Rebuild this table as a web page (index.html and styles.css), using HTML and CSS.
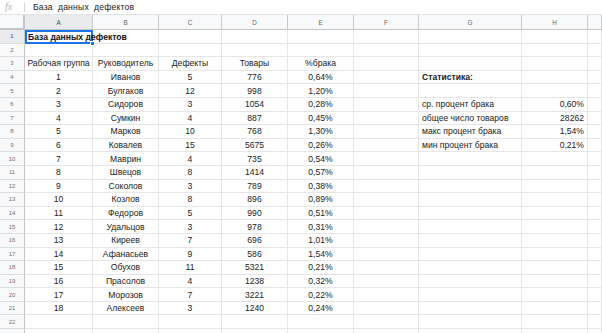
FILE: index.html
```html
<!DOCTYPE html>
<html lang="ru">
<head>
<meta charset="utf-8">
<link rel="stylesheet" href="styles.css">
</head>
<body>
<div class="fbar">
  <span class="fx">fx</span>
  <span class="sep"></span>
  <span class="ftext">База данных дефектов</span>
</div>
<div class="sheet">
  <div class="corner"></div>
  <div class="ch sel">A</div><div class="ch">B</div><div class="ch">C</div><div class="ch">D</div><div class="ch">E</div><div class="ch">F</div><div class="ch">G</div><div class="ch">H</div><div class="ch"></div>

  <div class="rh sel">1</div><div class="c active"><span class="title">База данных дефектов</span><span class="handle"></span></div><div class="c"></div><div class="c"></div><div class="c"></div><div class="c"></div><div class="c"></div><div class="c"></div><div class="c"></div><div class="c"></div>
  <div class="rh">2</div><div class="c"></div><div class="c"></div><div class="c"></div><div class="c"></div><div class="c"></div><div class="c"></div><div class="c"></div><div class="c"></div><div class="c"></div>
  <div class="rh">3</div><div class="c m">Рабочая группа</div><div class="c m">Руководитель</div><div class="c m">Дефекты</div><div class="c m">Товары</div><div class="c m">%брака</div><div class="c"></div><div class="c"></div><div class="c"></div><div class="c"></div>
  <div class="rh">4</div><div class="c m">1</div><div class="c m">Иванов</div><div class="c m">5</div><div class="c m">776</div><div class="c m">0,64%</div><div class="c"></div><div class="c b">Статистика:</div><div class="c"></div><div class="c"></div>
  <div class="rh">5</div><div class="c m">2</div><div class="c m">Булгаков</div><div class="c m">12</div><div class="c m">998</div><div class="c m">1,20%</div><div class="c"></div><div class="c"></div><div class="c"></div><div class="c"></div>
  <div class="rh">6</div><div class="c m">3</div><div class="c m">Сидоров</div><div class="c m">3</div><div class="c m">1054</div><div class="c m">0,28%</div><div class="c"></div><div class="c">ср. процент брака</div><div class="c r">0,60%</div><div class="c"></div>
  <div class="rh">7</div><div class="c m">4</div><div class="c m">Сумкин</div><div class="c m">4</div><div class="c m">887</div><div class="c m">0,45%</div><div class="c"></div><div class="c">общее число товаров</div><div class="c r">28262</div><div class="c"></div>
  <div class="rh">8</div><div class="c m">5</div><div class="c m">Марков</div><div class="c m">10</div><div class="c m">768</div><div class="c m">1,30%</div><div class="c"></div><div class="c">макс процент брака</div><div class="c r">1,54%</div><div class="c"></div>
  <div class="rh">9</div><div class="c m">6</div><div class="c m">Ковалев</div><div class="c m">15</div><div class="c m">5675</div><div class="c m">0,26%</div><div class="c"></div><div class="c">мин процент брака</div><div class="c r">0,21%</div><div class="c"></div>
  <div class="rh">10</div><div class="c m">7</div><div class="c m">Маврин</div><div class="c m">4</div><div class="c m">735</div><div class="c m">0,54%</div><div class="c"></div><div class="c"></div><div class="c"></div><div class="c"></div>
  <div class="rh">11</div><div class="c m">8</div><div class="c m">Швецов</div><div class="c m">8</div><div class="c m">1414</div><div class="c m">0,57%</div><div class="c"></div><div class="c"></div><div class="c"></div><div class="c"></div>
  <div class="rh">12</div><div class="c m">9</div><div class="c m">Соколов</div><div class="c m">3</div><div class="c m">789</div><div class="c m">0,38%</div><div class="c"></div><div class="c"></div><div class="c"></div><div class="c"></div>
  <div class="rh">13</div><div class="c m">10</div><div class="c m">Козлов</div><div class="c m">8</div><div class="c m">896</div><div class="c m">0,89%</div><div class="c"></div><div class="c"></div><div class="c"></div><div class="c"></div>
  <div class="rh">14</div><div class="c m">11</div><div class="c m">Федоров</div><div class="c m">5</div><div class="c m">990</div><div class="c m">0,51%</div><div class="c"></div><div class="c"></div><div class="c"></div><div class="c"></div>
  <div class="rh">15</div><div class="c m">12</div><div class="c m">Удальцов</div><div class="c m">3</div><div class="c m">978</div><div class="c m">0,31%</div><div class="c"></div><div class="c"></div><div class="c"></div><div class="c"></div>
  <div class="rh">16</div><div class="c m">13</div><div class="c m">Киреев</div><div class="c m">7</div><div class="c m">696</div><div class="c m">1,01%</div><div class="c"></div><div class="c"></div><div class="c"></div><div class="c"></div>
  <div class="rh">17</div><div class="c m">14</div><div class="c m">Афанасьев</div><div class="c m">9</div><div class="c m">586</div><div class="c m">1,54%</div><div class="c"></div><div class="c"></div><div class="c"></div><div class="c"></div>
  <div class="rh">18</div><div class="c m">15</div><div class="c m">Обухов</div><div class="c m">11</div><div class="c m">5321</div><div class="c m">0,21%</div><div class="c"></div><div class="c"></div><div class="c"></div><div class="c"></div>
  <div class="rh">19</div><div class="c m">16</div><div class="c m">Прасолов</div><div class="c m">4</div><div class="c m">1238</div><div class="c m">0,32%</div><div class="c"></div><div class="c"></div><div class="c"></div><div class="c"></div>
  <div class="rh">20</div><div class="c m">17</div><div class="c m">Морозов</div><div class="c m">7</div><div class="c m">3221</div><div class="c m">0,22%</div><div class="c"></div><div class="c"></div><div class="c"></div><div class="c"></div>
  <div class="rh">21</div><div class="c m">18</div><div class="c m">Алексеев</div><div class="c m">3</div><div class="c m">1240</div><div class="c m">0,24%</div><div class="c"></div><div class="c"></div><div class="c"></div><div class="c"></div>
  <div class="rh">22</div><div class="c"></div><div class="c"></div><div class="c"></div><div class="c"></div><div class="c"></div><div class="c"></div><div class="c"></div><div class="c"></div><div class="c"></div>
  <div class="rh">23</div><div class="c"></div><div class="c"></div><div class="c"></div><div class="c"></div><div class="c"></div><div class="c"></div><div class="c"></div><div class="c"></div><div class="c"></div>
</div>
</body>
</html>
```

FILE: styles.css
```css
* { box-sizing: border-box; }
html, body {
  margin: 0;
  padding: 0;
  background: #fff;
  overflow: hidden;
  width: 602px;
  height: 333px;
  font-family: "Liberation Sans", Arial, sans-serif;
}
.fbar {
  height: 15px;
  display: flex;
  align-items: center;
  border-bottom: 1px solid #e2e3e3;
  background: #fff;
}
.fx {
  font-family: "Liberation Serif", serif;
  font-style: italic;
  font-size: 10px;
  color: #b8b8b8;
  width: 24px;
  padding-left: 5px;
  line-height: 1;
}
.sep {
  width: 1px;
  height: 9px;
  background: #d6d6d6;
}
.ftext {
  padding-left: 8px;
  font-size: 8.6px;
  color: #222;
  word-spacing: 2.5px;
  letter-spacing: 0.2px;
}
.sheet {
  display: grid;
  grid-template-columns: 25px 68px 66px 63px 66px 66px 65px 103px 66px 1fr;
  grid-template-rows: 15px;
  grid-auto-rows: 13.6px;
}
.corner {
  background: #f8f9fa;
  border-right: 2px solid #c4c7c5;
  border-bottom: 2px solid #c4c7c5;
}
.ch {
  background: #f8f9fa;
  border-right: 1px solid #c8cacc;
  border-bottom: 1px solid #c4c7c5;
  color: #5f6368;
  font-size: 6.3px;
  display: flex;
  align-items: center;
  justify-content: center;
}
.ch.sel { background: #e8eaed; color: #4a4d51; }
.rh {
  background: #f8f9fa;
  border-right: 1px solid #c4c7c5;
  border-bottom: 1px solid #dcdee0;
  color: #6f7378;
  font-size: 6px;
  display: flex;
  align-items: center;
  justify-content: center;
}
.rh.sel { background: #e8eaed; color: #4a4d51; }
.c {
  border-right: 1px solid #e6e6e6;
  border-bottom: 1px solid #e6e6e6;
  font-size: 8.6px;
  color: #222;
  display: flex;
  align-items: center;
  padding: 0 3px;
  white-space: nowrap;
  overflow: hidden;
}
.c.m { justify-content: center; }
.c.r { justify-content: flex-end; }
.c.b { font-weight: bold; }
.c.active {
  overflow: visible;
  position: relative;
  border: 2px solid #1a73e8;
  padding: 0 1px;
  z-index: 1;
}
.title {
  font-weight: bold;
  font-size: 8.6px;
  color: #111;
}
.handle {
  position: absolute;
  right: -4px;
  bottom: -4px;
  width: 5px;
  height: 5px;
  background: #1a73e8;
  border: 1px solid #fff;
}
```
